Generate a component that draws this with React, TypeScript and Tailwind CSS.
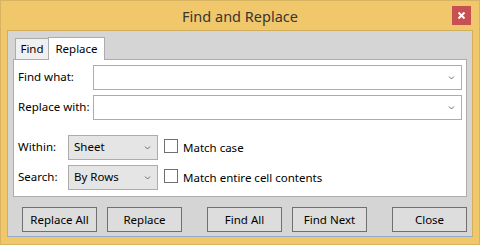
import React from "react";

const Chevron = () => (
  <svg width="7" height="5" viewBox="0 0 7 5" className="shrink-0">
    <path d="M1 1.5 L3.5 4 L6 1.5" fill="none" stroke="#6d6d6d" strokeWidth="1" />
  </svg>
);

const Field = () => (
  <div className="flex-1 h-[25px] bg-white border border-[#acacac] flex items-center justify-end pr-[6px]">
    <Chevron />
  </div>
);

const Combo = ({ value }: { value: string }) => (
  <div className="w-[90px] h-[25px] bg-[#e5e5e5] border border-[#acacac] flex items-center justify-between pl-[5px] pr-[6px]">
    <span className="-mt-[1px]">{value}</span>
    <Chevron />
  </div>
);

const Check = ({ label }: { label: string }) => (
  <div className="flex items-center ml-[6px] gap-[5px]">
    <div className="w-[14px] h-[14px] bg-white border border-[#707070] mb-[3px]" />
    <span>{label}</span>
  </div>
);

const Btn = ({ label, className = "" }: { label: string; className?: string }) => (
  <div
    className={
      "w-[75px] h-[25px] bg-[#dddddd] border border-[#707070] flex items-center justify-center " +
      className
    }
  >
    {label}
  </div>
);

export default function App() {
  return (
    <div
      className="w-[480px] h-[245px] bg-[#f0c86b] border border-[#d9b460] flex flex-col text-[11.5px] leading-[16px] text-black"
      style={{ fontFamily: '"Noto Sans", "Open Sans", sans-serif' }}
    >
      {/* title bar */}
      <div className="relative h-[29px] shrink-0 flex items-center justify-center">
        <span className="text-[14.5px] text-[#3a3530] mt-[1px]">Find and Replace</span>
        <div className="absolute right-[8px] top-[5px] w-[19px] h-[19px] bg-[#c75050] flex items-center justify-center">
          <svg width="7" height="7" viewBox="0 0 7 7">
            <path d="M0.5 0.5 L6.5 6.5 M6.5 0.5 L0.5 6.5" stroke="white" strokeWidth="2" />
          </svg>
        </div>
      </div>
      {/* client area */}
      <div className="mx-[6px] h-[207px] bg-[#d5d5d5] border-x border-t border-[#d2ad5a] border-b border-b-[#93aac8] flex flex-col">
        {/* tabs */}
        <div className="flex items-end ml-[7px] mt-[5px] h-[23px] relative z-10">
          <div className="h-[21px] w-[33px] bg-[#f0f0f0] border border-[#acacac] border-r-0 border-b-0 flex items-center justify-center">
            Find
          </div>
          <div className="h-[23px] w-[57px] bg-white border border-[#acacac] border-b-0 flex items-center justify-center -mb-[1px]">
            Replace
          </div>
        </div>
        {/* panel */}
        <div className="mx-[5px] h-[138px] bg-white border border-[#acacac] flex flex-col px-[4px] pt-[5px]">
          <div className="flex items-center">
            <span className="w-[75px] -mt-[1px]">Find what:</span>
            <Field />
          </div>
          <div className="flex items-center mt-[5px]">
            <span className="w-[75px] -mt-[1px]">Replace with:</span>
            <Field />
          </div>
          <div className="flex items-center mt-[15px]">
            <span className="w-[50px] -mt-[1px]">Within:</span>
            <Combo value="Sheet" />
            <Check label="Match case" />
          </div>
          <div className="flex items-center mt-[5px]">
            <span className="w-[50px] -mt-[1px]">Search:</span>
            <Combo value="By Rows" />
            <Check label="Match entire cell contents" />
          </div>
        </div>
        {/* buttons */}
        <div className="flex mt-[10px] ml-[14px]">
          <Btn label="Replace All" />
          <Btn label="Replace" className="ml-[10px]" />
          <Btn label="Find All" className="ml-[25px]" />
          <Btn label="Find Next" className="ml-[10px]" />
          <Btn label="Close" className="ml-[25px]" />
        </div>
      </div>
    </div>
  );
}
